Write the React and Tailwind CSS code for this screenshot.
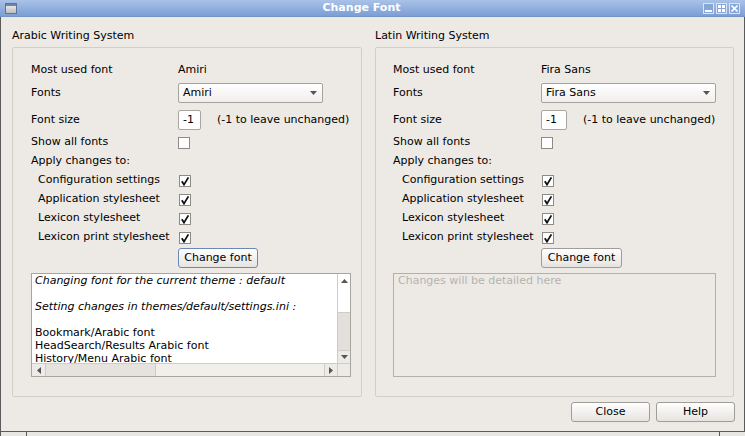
import React from 'react';

const Check = () => (
  <svg width="10" height="10" viewBox="0 0 10 10">
    <path d="M1.8 5.2 L4 8.6 L8.4 1.4" fill="none" stroke="#111" strokeWidth="1.8" />
  </svg>
);

const CheckBox = ({ checked }) => (
  <div className="w-[12px] h-[12px] bg-white border border-[#8e8b87] flex items-center justify-center">
    {checked && <Check />}
  </div>
);

const Arrow = ({ dir }) => {
  const pts = {
    up: '0,4 3.5,0 7,4',
    down: '0,0 7,0 3.5,4',
    left: '4,0 4,7 0,3.5',
    right: '0,0 0,7 4,3.5',
  }[dir];
  const w = dir === 'up' || dir === 'down' ? 7 : 4;
  const h = dir === 'up' || dir === 'down' ? 4 : 7;
  return (
    <svg width={w} height={h} viewBox={`0 0 ${w} ${h}`}>
      <polygon points={pts} fill="#555" />
    </svg>
  );
};

const Button = ({ children, width, focused }) => (
  <div
    className={`h-[20px] rounded-[3px] border bg-gradient-to-b from-white to-[#e6e4e0] flex items-center justify-center ${
      focused ? 'border-[#6c88b4]' : 'border-[#a09d99]'
    }`}
    style={{ width }}
  >
    {children}
  </div>
);

const SubRow = ({ label, indent, labelW }) => (
  <div className="h-[19px] flex items-center">
    <div style={{ width: labelW, paddingLeft: indent }}>{label}</div>
    <div className="ml-px">
      <CheckBox checked />
    </div>
  </div>
);

const Panel = ({ title, font, width, padL, labelW, indent, comboW, spinW, btnW, areaW, children }) => (
  <div className="flex flex-col" style={{ width }}>
    <div className="h-[13px] leading-[13px]">{title}</div>
    <div
      className="mt-[5px] h-[350px] border border-[#d2cfca] rounded-[2px] flex flex-col"
      style={{ paddingLeft: padL }}
    >
      <div className="mt-[12px] h-[20px] flex items-center">
        <div style={{ width: labelW }}>Most used font</div>
        <div>{font}</div>
      </div>
      <div className="mt-[3px] h-[20px] flex items-center">
        <div style={{ width: labelW }}>Fonts</div>
        <div
          className="h-[20px] rounded-[2px] border border-[#a5a29d] bg-gradient-to-b from-white to-[#f1efeb] flex items-center justify-between pl-[4px] pr-[5px]"
          style={{ width: comboW }}
        >
          <span>{font}</span>
          <Arrow dir="down" />
        </div>
      </div>
      <div className="mt-[7px] h-[20px] flex items-center">
        <div style={{ width: labelW }}>Font size</div>
        <div
          className="h-[20px] bg-white border border-[#a9a6a2] rounded-[2px] flex items-center pl-[4px]"
          style={{ width: spinW }}
        >
          -1
        </div>
        <div className="ml-[16px]">(-1 to leave unchanged)</div>
      </div>
      <div className="mt-[6px] h-[13px] flex items-center">
        <div style={{ width: labelW }}>Show all fonts</div>
        <CheckBox />
      </div>
      <div className="mt-[6px] h-[13px] flex items-center">Apply changes to:</div>
      <div className="mt-[3px] flex flex-col">
        <SubRow label="Configuration settings" indent={indent} labelW={labelW} />
        <SubRow label="Application stylesheet" indent={indent} labelW={labelW} />
        <SubRow label="Lexicon stylesheet" indent={indent} labelW={labelW} />
        <SubRow label="Lexicon print stylesheet" indent={indent} labelW={labelW} />
      </div>
      <div className="mt-[1px] flex">
        <div style={{ width: labelW }} />
        <Button width={btnW} focused={title.startsWith('Arabic')}>Change font</Button>
      </div>
      <div className="mt-[5px] h-[104px]" style={{ width: areaW }}>
        {children}
      </div>
    </div>
  </div>
);

const LogArea = () => (
  <div className="h-full border border-[#a9a6a2] bg-white flex flex-col">
    <div className="flex-1 flex min-h-0">
      <div className="flex-1 overflow-hidden pl-[3px] leading-[13px] whitespace-nowrap">
        <div className="italic">Changing font for the current theme : default</div>
        <div className="h-[13px]" />
        <div className="italic">Setting changes in themes/default/settings.ini :</div>
        <div className="h-[13px]" />
        <div>Bookmark/Arabic font</div>
        <div>HeadSearch/Results Arabic font</div>
        <div>History/Menu Arabic font</div>
      </div>
      <div className="w-[13px] flex flex-col border-l border-[#cfccc7] bg-[#e3e0db]">
        <div className="h-[13px] bg-white flex items-center justify-center">
          <Arrow dir="up" />
        </div>
        <div className="h-[26px] bg-white border-b border-[#cfccc7]" />
        <div className="flex-1" />
        <div className="h-[13px] flex items-center justify-center border-t border-[#cfccc7] bg-[#edebe7]">
          <Arrow dir="down" />
        </div>
      </div>
    </div>
    <div className="h-[13px] flex border-t border-[#cfccc7]">
      <div className="w-[13px] flex items-center justify-center bg-[#edebe7]">
        <Arrow dir="left" />
      </div>
      <div className="w-[111px] bg-[#e6e3de] border-x border-[#cfccc7]" />
      <div className="flex-1 bg-[#f1efec]" />
      <div className="w-[13px] flex items-center justify-center bg-[#edebe7] border-l border-[#cfccc7]">
        <Arrow dir="right" />
      </div>
      <div className="w-[13px] bg-[#edebe7] border-l border-[#cfccc7]" />
    </div>
  </div>
);

const EmptyArea = () => (
  <div className="h-full border border-[#b3b0ab] pl-[4px] leading-[13px] text-[#b6b3ae]">
    Changes will be detailed here
  </div>
);

const WinBtn = ({ children }) => (
  <div className="w-[11px] h-[11px] border border-[#dbe5f4] bg-[#86a6d8] flex items-center justify-center">
    {children}
  </div>
);

export default function App() {
  return (
    <div className="w-[745px] h-[436px] overflow-hidden bg-[#edeae5] font-['DejaVu_Sans',sans-serif] text-[11px] text-black flex flex-col">
      <div className="h-[17px] bg-gradient-to-b from-[#a9c2e8] to-[#7c9ed4] flex items-center border-b border-[#7494c6]">
        <div className="w-[20px] pl-[5px]">
          <div className="w-[12px] h-[11px] border border-[#5d7397] bg-gradient-to-b from-[#f2f2f2] to-[#bdbdbd] flex flex-col">
            <div className="h-[2px] bg-[#6f85a8]" />
          </div>
        </div>
        <div className="flex-1 text-center font-bold text-white">Change Font</div>
        <div className="flex gap-[2px] pr-[5px]">
          <WinBtn>
            <div className="w-[7px] h-[2px] bg-white mt-[5px]" />
          </WinBtn>
          <WinBtn>
            <div className="grid grid-cols-2 gap-[1px]">
              <div className="w-[3px] h-[3px] bg-white" />
              <div className="w-[3px] h-[3px] bg-white" />
              <div className="w-[3px] h-[3px] bg-white" />
              <div className="w-[3px] h-[3px] bg-white" />
            </div>
          </WinBtn>
          <WinBtn>
            <svg width="7" height="7" viewBox="0 0 7 7">
              <path d="M0.5 0.5 L6.5 6.5 M6.5 0.5 L0.5 6.5" stroke="#fff" strokeWidth="1.6" />
            </svg>
          </WinBtn>
        </div>
      </div>
      <div className="h-[415px] flex flex-col border-x border-b border-[#5a5a5a] pl-[11px] pr-[9px] pt-[12px]">
        <div className="flex gap-[13px]">
          <Panel
            title="Arabic Writing System"
            font="Amiri"
            width={350}
            padL={18}
            labelW={147}
            indent={7}
            comboW={145}
            spinW={23}
            btnW={80}
            areaW={320}
          >
            <LogArea />
          </Panel>
          <Panel
            title="Latin Writing System"
            font="Fira Sans"
            width={359}
            padL={17}
            labelW={148}
            indent={9}
            comboW={175}
            spinW={26}
            btnW={81}
            areaW={323}
          >
            <EmptyArea />
          </Panel>
        </div>
        <div className="mt-[5px] flex justify-end gap-[6px]">
          <Button width={79}>Close</Button>
          <Button width={79}>Help</Button>
        </div>
      </div>
      <div className="h-[4px] flex bg-[#e9e7e3] border-l border-[#5a5a5a]">
        <div className="w-[25px]" />
        <div className="flex-1 border-l border-[#5a5a5a]" />
        <div className="w-[26px] border-l border-[#5a5a5a]" />
      </div>
    </div>
  );
}
